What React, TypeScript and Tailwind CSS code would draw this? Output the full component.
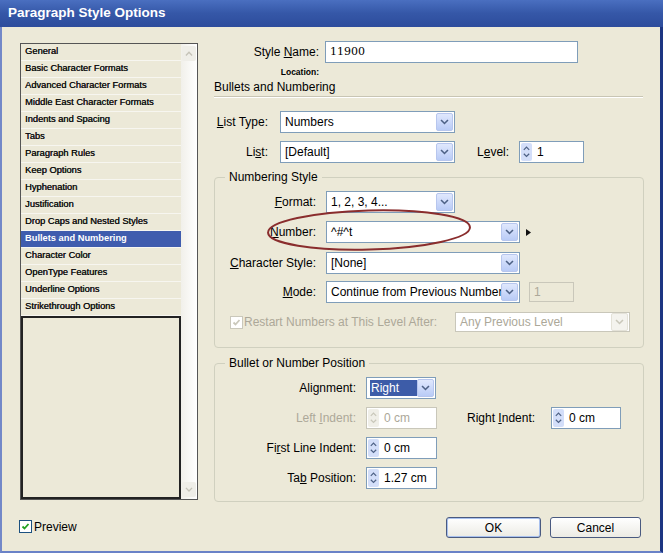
import type { ReactNode } from 'react'
import clsx from 'clsx'

const categories = [
  'General',
  'Basic Character Formats',
  'Advanced Character Formats',
  'Middle East Character Formats',
  'Indents and Spacing',
  'Tabs',
  'Paragraph Rules',
  'Keep Options',
  'Hyphenation',
  'Justification',
  'Drop Caps and Nested Styles',
  'Bullets and Numbering',
  'Character Color',
  'OpenType Features',
  'Underline Options',
  'Strikethrough Options',
]

function Chevron({ up, color = '#4d6185', size = 9 }: { up?: boolean; color?: string; size?: number }) {
  return (
    <svg width={size} height={size * 0.66} viewBox="0 0 9 6">
      <path d={up ? 'M1 5 4.5 1.5 8 5' : 'M1 1l3.5 3.5L8 1'} fill="none" stroke={color} strokeWidth={1.6} />
    </svg>
  )
}

function DropButton({ disabled }: { disabled?: boolean }) {
  return (
    <div
      className={clsx(
        'ml-auto mr-px flex h-[18px] w-[17px] shrink-0 items-center justify-center rounded-[2px] border',
        disabled ? 'border-[#e4e2d8] bg-[#f4f3ee]' : 'border-[#b7c6ee] bg-gradient-to-b from-[#e0e8fd] to-[#b9cbf6]',
      )}
    >
      <Chevron color={disabled ? '#c9c7ba' : '#4d6185'} />
    </div>
  )
}

function Select({ className, value, disabled, highlight }: { className: string; value: string; disabled?: boolean; highlight?: boolean }) {
  return (
    <div
      className={clsx(
        'flex shrink-0 items-center border bg-white',
        disabled ? 'border-[#c9c7ba] text-[#aca899]' : 'border-[#7f9db9] text-black',
        className,
      )}
    >
      {highlight ? (
        <span className="ml-[3px] flex h-[16px] w-[48px] items-center bg-[#3d5ca8] pl-[1px] text-white">{value}</span>
      ) : (
        <span className="min-w-0 flex-1 overflow-hidden whitespace-nowrap pl-[4px]">{value}</span>
      )}
      <DropButton disabled={disabled} />
    </div>
  )
}

function Spinner({ className, value, disabled }: { className: string; value: string; disabled?: boolean }) {
  return (
    <div
      className={clsx(
        'flex h-[22px] shrink-0 items-center border bg-white',
        disabled ? 'border-[#c9c7ba] bg-[#f4f3ee] text-[#aca899]' : 'border-[#7f9db9] text-black',
        className,
      )}
    >
      <div
        className={clsx(
          'ml-px flex h-[18px] w-[11px] flex-col items-center justify-center gap-[2px] rounded-[2px]',
          disabled ? 'bg-[#f0efe8]' : 'bg-[#d3def9]',
        )}
      >
        <Chevron up size={7} color={disabled ? '#c9c7ba' : '#4d6185'} />
        <Chevron size={7} color={disabled ? '#c9c7ba' : '#4d6185'} />
      </div>
      <span className="pl-[5px]">{value}</span>
    </div>
  )
}

function Check({ disabled }: { disabled?: boolean }) {
  return (
    <div
      className={clsx(
        'flex h-[13px] w-[13px] shrink-0 items-center justify-center border bg-white',
        disabled ? 'border-[#cac8bb]' : 'border-[#1c5180]',
      )}
    >
      <svg width="9" height="9" viewBox="0 0 9 9">
        <path d="M1.5 4.5 3.5 6.5 7.5 2" fill="none" stroke={disabled ? '#cac8bb' : '#21a121'} strokeWidth={1.8} />
      </svg>
    </div>
  )
}

function Group({ legend, className, children }: { legend: string; className: string; children: ReactNode }) {
  return (
    <fieldset className={clsx('rounded-[4px] border border-[#d0d0bf]', className)}>
      <legend className="ml-[10px] px-[4px] leading-[14px]">{legend}</legend>
      {children}
    </fieldset>
  )
}

export default function App() {
  return (
    <div className="relative h-[553px] w-[671px] overflow-hidden bg-white font-['Liberation_Sans',Arial,sans-serif] text-[12px] text-black">
      <div className="flex h-[553px] w-[663px] flex-col">
        <div className="flex h-[27px] shrink-0 items-center bg-gradient-to-b from-[#4a6fc0] via-[#3557a7] to-[#2d4c9c] pl-[8px] text-[13.5px] font-bold text-white">
          Paragraph Style Options
        </div>

        <div className="flex flex-1 flex-col border-b-2 border-l-2 border-r-[3px] border-b-[#6a82c7] border-l-[#7388c8] border-r-[#1c3582] bg-[#ece9d8]">
          <div className="flex pt-[13px]">
            {/* category list */}
            <div className="ml-[18px] mt-[3px] flex h-[457px] w-[178px] border border-[#555]">
              <div className="flex w-[160px] flex-col">
                {categories.map((name) => (
                  <div
                    key={name}
                    className={clsx(
                      'flex h-[17px] shrink-0 items-center border-b border-[#f7f6f0] pl-[4px] text-[9.3px] leading-none',
                      name === 'Bullets and Numbering'
                        ? 'bg-[#3f5cae] font-bold text-white'
                        : 'bg-[#ece9d8] text-[#111] [text-shadow:0.35px_0_0_#111]',
                    )}
                  >
                    {name}
                  </div>
                ))}
                <div className="flex-1 border-2 border-[#222]" />
              </div>
              <div className="flex flex-1 flex-col justify-between bg-gradient-to-r from-[#f1f0ea] to-white py-[2px]">
                <div className="mx-auto flex h-[15px] w-[14px] items-center justify-center rounded-[2px] bg-[#efeee8]">
                  <Chevron up size={8} color="#c5c3b8" />
                </div>
                <div className="mx-auto flex h-[15px] w-[14px] items-center justify-center rounded-[2px] bg-[#efeee8]">
                  <Chevron size={8} color="#c5c3b8" />
                </div>
              </div>
            </div>

            {/* settings */}
            <div className="relative ml-[16px] flex w-[430px] flex-col">
              <div className="flex h-[22px] items-center pt-[2px]">
                <span className="w-[105px] text-right">
                  Style <u>N</u>ame:
                </span>
                <div className="ml-[6px] flex h-[22px] w-[253px] items-center border border-[#7f9db9] bg-white pl-[4px] font-['DejaVu_Serif',serif] text-[11px]">
                  11900
                </div>
              </div>
              <div className="mt-[4px] flex h-[12px] items-center">
                <span className="w-[105px] text-right text-[8.5px] font-bold">Location:</span>
              </div>
              <div className="mt-[2px] h-[14px] leading-[14px]">Bullets and Numbering</div>
              <div className="mt-[2px] w-[429px] border-b border-t border-b-white border-t-[#c8c5b4]" />

              <div className="mt-[13px] flex items-center">
                <span className="w-[54px] text-right">
                  <u>L</u>ist Type:
                </span>
                <Select className="ml-[12px] h-[22px] w-[175px]" value="Numbers" />
              </div>
              <div className="mt-[8px] flex items-center">
                <span className="w-[54px] text-right">
                  Li<u>s</u>t:
                </span>
                <Select className="ml-[12px] h-[22px] w-[175px]" value="[Default]" />
                <span className="ml-[22px] w-[34px]">
                  L<u>e</u>vel:
                </span>
                <Spinner className="ml-[8px] w-[65px]" value="1" />
              </div>

              <Group legend="Numbering Style" className="mt-[7px] pb-[15px]">
                <div className="mt-[7px] flex items-center pl-[14px]">
                  <span className="w-[87px] text-right">
                    <u>F</u>ormat:
                  </span>
                  <Select className="ml-[10px] h-[22px] w-[129px]" value="1, 2, 3, 4..." />
                </div>
                <div className="mt-[8px] flex items-center pl-[14px]">
                  <span className="w-[87px] text-right">
                    <u>N</u>umber:
                  </span>
                  <Select className="ml-[10px] h-[22px] w-[194px]" value="^#^t" />
                  <svg className="ml-[6px]" width="5" height="7" viewBox="0 0 5 7">
                    <path d="M0 0 5 3.5 0 7Z" fill="#111" />
                  </svg>
                </div>
                <div className="mt-[9px] flex items-center pl-[14px]">
                  <span className="w-[87px] text-right">
                    <u>C</u>haracter Style:
                  </span>
                  <Select className="ml-[10px] h-[22px] w-[194px]" value="[None]" />
                </div>
                <div className="mt-[7px] flex items-center pl-[14px]">
                  <span className="w-[87px] text-right">
                    <u>M</u>ode:
                  </span>
                  <Select className="ml-[10px] h-[22px] w-[194px]" value="Continue from Previous Number" />
                  <div className="ml-[9px] flex h-[20px] w-[45px] items-center border border-[#c9c7ba] pl-[4px] text-[#aca899]">1</div>
                </div>
                <div className="mt-[9px] flex h-[20px] items-center pl-[15px] text-[#aca899]">
                  <Check disabled />
                  <span className="ml-[1px] w-[211px]">Restart Numbers at This Level After:</span>
                  <Select disabled className="h-[20px] w-[175px] bg-[#f4f3ee]" value="Any Previous Level" />
                </div>
              </Group>

              <Group legend="Bullet or Number Position" className="mt-[8px] pb-[12px]">
                <div className="mt-[7px] flex items-center pl-[14px]">
                  <span className="w-[127px] text-right">Alignment:</span>
                  <Select highlight className="ml-[10px] h-[22px] w-[70px]" value="Right" />
                </div>
                <div className="mt-[8px] flex items-center pl-[14px]">
                  <span className="w-[127px] text-right text-[#aca899]">
                    Left <u>I</u>ndent:
                  </span>
                  <Spinner disabled className="ml-[10px] w-[71px]" value="0 cm" />
                  <span className="ml-[30px] w-[74px]">
                    Right <u>I</u>ndent:
                  </span>
                  <Spinner className="ml-[10px] w-[70px]" value="0 cm" />
                </div>
                <div className="mt-[8px] flex items-center pl-[14px]">
                  <span className="w-[127px] text-right">
                    Fi<u>r</u>st Line Indent:
                  </span>
                  <Spinner className="ml-[10px] w-[71px]" value="0 cm" />
                </div>
                <div className="mt-[8px] flex items-center pl-[14px]">
                  <span className="w-[127px] text-right">
                    Ta<u>b</u> Position:
                  </span>
                  <Spinner className="ml-[10px] w-[71px]" value="1.27 cm" />
                </div>
              </Group>

              {/* red annotation ring around the Number field */}
              <svg className="pointer-events-none absolute left-[51px] top-[167px]" width="210" height="46" viewBox="0 0 210 46">
                <ellipse cx="104" cy="23" rx="101" ry="19.5" fill="none" stroke="#8a2d2d" strokeWidth="2" transform="rotate(-1.5 104 23)" />
              </svg>
            </div>
          </div>

          <div className="mt-[15px] flex h-[21px] items-center">
            <div className="ml-[17px] mt-[-2px] flex items-center">
              <Check />
              <span className="ml-[2px]">Preview</span>
            </div>
            <button
              type="button"
              className="ml-auto h-[21px] w-[95px] rounded-[3px] border border-[#4a5a80] bg-gradient-to-b from-white to-[#ecebe4] shadow-[inset_0_0_0_1px_#a9c1ee]"
            >
              OK
            </button>
            <button
              type="button"
              className="ml-[9px] mr-[19px] h-[21px] w-[91px] rounded-[3px] border border-[#4a5a80] bg-gradient-to-b from-white to-[#ecebe4]"
            >
              Cancel
            </button>
          </div>
        </div>
      </div>
    </div>
  )
}
